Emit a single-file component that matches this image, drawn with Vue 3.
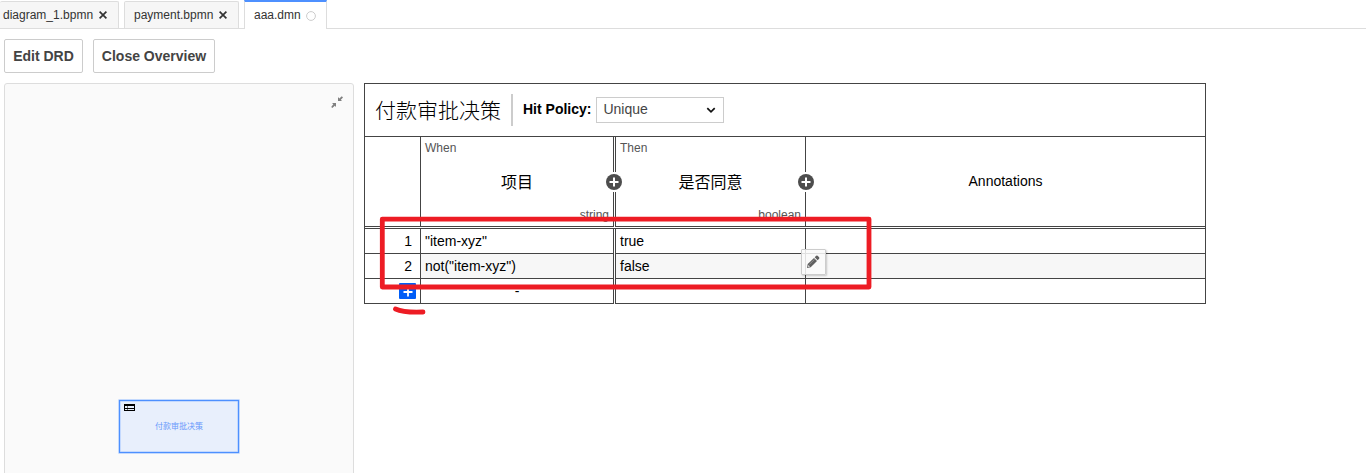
<script setup>
const tabs = [
  { name: 'diagram_1.bpmn', cls: 'first' },
  { name: 'payment.bpmn', cls: 'second' },
  { name: 'aaa.dmn', cls: 'active', active: true },
]
const rules = [
  { n: 1, when: '"item-xyz"', then: 'true' },
  { n: 2, when: 'not("item-xyz")', then: 'false', alt: true },
]
</script>

<template>
  <div class="app">
    <nav class="tabs">
      <div v-for="t in tabs" :key="t.name" class="tab" :class="t.cls">
        <span>{{ t.name }}</span>
        <svg v-if="t.active" class="dot" width="10" height="10"><circle cx="5" cy="5" r="4.4" fill="none" stroke="#ccc" /></svg>
        <svg v-else class="close" width="8" height="8"><path d="M.6.6 7.4 7.4M7.4.6.6 7.4" stroke="#333" stroke-width="1.7" /></svg>
      </div>
    </nav>

    <div class="toolbar">
      <button class="btn drd">Edit DRD</button>
      <button class="btn overview-btn">Close Overview</button>
    </div>

    <main class="content">
      <section class="overview">
        <svg class="collapse" width="12" height="12" viewBox="0 0 12 12">
          <path d="M7 1v4h4L9.8 3.8 12 1.4 10.8.3 8.3 2.4zM1 7h4v4L3.8 9.8 1.3 12 .2 10.9 2.3 8.3z" fill="#808080" />
        </svg>
        <div class="decision">
          <svg class="table-icon" width="11" height="8" shape-rendering="crispEdges">
            <path d="M0 0h11v2H0zM0 4h11v1H0zM0 6h11v1H0zM0 0h1v7H0zM10 0h1v7h-1z" fill="#000" />
            <path d="M3 2h1v2H3zM3 5h1v1H3z" fill="#777" />
          </svg>
          <span>付款审批决策</span>
        </div>
      </section>

      <section class="table">
        <header class="title-row">
          <h1>付款审批决策</h1>
          <div class="policy">
            <b>Hit Policy:</b>
            <div class="select">
              <span>Unique</span>
              <svg width="10" height="7"><path d="M1.3 1.2 5 4.9 8.700 1.2" fill="none" stroke="#111" stroke-width="1.7" /></svg>
            </div>
          </div>
        </header>
        <div class="row head">
          <div class="cell index"></div>
          <div class="cell when">
            <small>When</small><strong>项目</strong><small class="type">string</small>
            <i class="add"><svg width="16" height="16"><circle cx="8" cy="8" r="8" fill="#4d4d4d" /><path d="M8 3.500v9M3.500 8h9" stroke="#fff" stroke-width="2" /></svg></i>
          </div>
          <div class="cell then">
            <small>Then</small><strong>是否同意</strong><small class="type">boolean</small>
            <i class="add"><svg width="16" height="16"><circle cx="8" cy="8" r="8" fill="#4d4d4d" /><path d="M8 3.500v9M3.500 8h9" stroke="#fff" stroke-width="2" /></svg></i>
          </div>
          <div class="cell notes">Annotations</div>
        </div>
        <div class="body">
          <div v-for="r in rules" :key="r.n" class="row" :class="{ alt: r.alt }">
            <div class="cell index">{{ r.n }}</div>
            <div class="cell when">{{ r.when }}</div>
            <div class="cell then">{{ r.then }}</div>
            <div class="cell"></div>
          </div>
          <div class="row">
            <div class="cell index">
              <span class="add-rule"><svg width="10" height="10"><path d="M5 .5v9M.5 5h9" stroke="#fff" stroke-width="1.8" /></svg></span>
            </div>
            <div class="cell when dash">-</div>
            <div class="cell then"></div>
            <div class="cell"></div>
          </div>
        </div>
        <div class="edit">
          <svg width="14" height="14" viewBox="0 0 14 14">
            <path d="M8.700 2.200 10.200.8q.7-.6 1.400 0l1.500 1.500q.6.7 0 1.400l-1.500 1.500z" fill="#606060" />
            <path d="M8 2.900 11 5.900 4.700 12.200 1 13l.7-3.900z" fill="#606060" />
            <path d="M3.400 9.400 8.600 4.300" stroke="#999" stroke-width=".8" />
            <path d="M2.400 10 4 11.600 2 12.100z" fill="#eee" />
          </svg>
        </div>
      </section>
    </main>

    <svg class="marks" width="510" height="110" fill="none" stroke="#ed1c24" stroke-width="4.800" stroke-linejoin="round" stroke-linecap="round">
      <path d="M12.300 9.100H499V77H12.300z" />
      <path d="M25.500 99C32 102 41 102.500 53 102" />
    </svg>
  </div>
</template>

<style>
body { margin: 0; background: #fff; }
</style>

<style scoped>
.app {
  position: relative; height: 473px; overflow: hidden;
  font: 14px/16px "Liberation Sans", "Noto Sans CJK SC", sans-serif; color: #000;
}
.app *, .app { box-sizing: border-box; }
.tabs { display: flex; gap: 5px; height: 29px; border-bottom: 1px solid #ddd; align-items: flex-end; }
.tab {
  display: flex; align-items: center; height: 27px; font-size: 12px; color: #333;
  background: #f6f6f6; border: 1px solid #ddd; border-bottom: 0; border-radius: 2px 2px 0 0;
}
.tab.first { width: 119px; padding-left: 3px; border-left: 0; }
.tab.second { width: 115px; padding-left: 9px; }
.tab.active { width: 83px; height: 29px; margin-bottom: -1px; padding: 0 0 2px 9px; background: #fff; border-top: 2px solid #4d90ff; border-radius: 0; }
.close { margin-left: 6px; margin-bottom: 1px; }
.dot { margin-left: 5px; margin-top: 3px; }
.toolbar { display: flex; gap: 10px; padding: 10px 4px; }
.btn {
  height: 34px; padding: 0; border: 1px solid #ccc; border-radius: 2px; background: #fff; color: #444;
  font: bold 14px/16px "Liberation Sans", sans-serif;
}
.drd { width: 79px; }
.overview-btn { width: 122px; }
.content { display: flex; gap: 10px; padding-left: 4px; align-items: flex-start; }
.overview {
  width: 350px; height: 400px; flex: none; position: relative; background: #fafafa;
  border: 1px solid #ddd; border-radius: 3px;
}
.collapse { position: absolute; right: 10px; top: 12px; }
.decision {
  position: absolute; left: 114px; top: 316px; width: 120px; height: 53px;
  display: flex; align-items: center; justify-content: center;
  border: 1px solid #4d90ff; box-shadow: 0 0 0 .6px #a0c3ff, inset 0 0 0 .5px #a0c3ff; background: #e8effc; color: #6798fb; font-size: 8px;
}
.table-icon { position: absolute; left: 4px; top: 3px; }
.table { width: 842px; position: relative; border: 1px solid #444; border-bottom: 0; }
.title-row { display: flex; height: 53px; border-bottom: 1px solid #444; padding-left: 10px; align-items: center; }
h1 { margin: 0; padding-top: 2px; width: 126px; font-size: 21px; line-height: 30px; font-weight: 300; white-space: nowrap; }
.policy { display: flex; align-items: center; height: 32px; margin-left: 10px; padding-left: 10px; border-left: 2px solid #ccc; }
.policy b, .select span { padding-bottom: 2px; }
.select {
  display: flex; align-items: center; justify-content: space-between; width: 128px; height: 26px;
  margin-left: 5px; padding: 0 7px 0 6px; border: 1px solid #ccc; color: #444;
}
.row { display: grid; grid-template-columns: 56px 194px 191px 399px; height: 25px; }
.cell { border-bottom: 1px solid #444; line-height: 24px; padding-left: 4px; position: relative; }
.index { border-right: 1px solid #444; text-align: right; padding: 0 8px 0 0; }
.when::after {
  content: ""; box-sizing: border-box; position: absolute; right: 0; top: 0; bottom: -1px;
  width: 2px; border-left: 1px solid #444; background: #fff;
}
.then { border-left: 1px solid #444; border-right: 1px solid #444; }
.alt .when, .alt .then, .alt .cell:last-child { background: #f7f7f7; }
.head { height: 90px; }
.head .cell { display: flex; flex-direction: column; justify-content: space-between; padding: 4px; line-height: 14px; }
.head small { font-size: 12px; color: #555; }
.head strong { font-weight: 400; font-size: 16px; line-height: 20px; padding-top: 2px; text-align: center; }
.head .type { text-align: right; }
.head .when { padding-right: 6px; }
.head .then { padding-right: 4px; }
.head .cell.notes { justify-content: center; align-items: center; padding-bottom: 6px; }
.add { position: absolute; z-index: 2; width: 16px; height: 20px; right: -7px; top: 35px; background: #fff; display: flex; align-items: center; }
.then .add { right: -9px; }
.body { margin-top: 1px; border-top: 1px solid #444; position: relative; }
.dash { text-align: center; padding-right: 6px; }
.add-rule {
  position: absolute; right: 4px; top: 4px; width: 17px; height: 16px; border-radius: 1px;
  background: #005df7; display: flex; align-items: center; justify-content: center; padding-top: 2px;
}
.edit {
  position: absolute; left: 436px; top: 165px; width: 25px; height: 26px; display: flex;
  align-items: center; justify-content: center; padding-right: 2px; background: rgba(250, 250, 250, .86);
  border: 1px solid #ccc; border-radius: 1px; box-shadow: 1px 1px 2px rgba(0, 0, 0, .2);
}
.marks { position: absolute; left: 370px; top: 210px; }
</style>
